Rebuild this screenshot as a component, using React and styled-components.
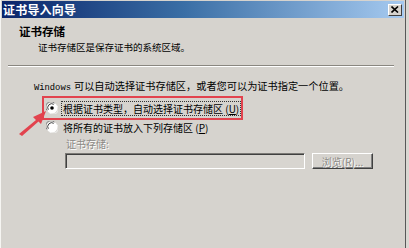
import React from "react";
import styled, { createGlobalStyle } from "styled-components";

const GlobalStyle = createGlobalStyle`
  html, body {
    margin: 0;
    padding: 0;
    background: #dad7d2;
  }
  body {
    font-family: "Noto Sans CJK SC", "Noto Sans", sans-serif;
    color: #000;
  }
`;

const Page = styled.div`
  width: 409px;
  height: 248px;
  overflow: hidden;
  background: #dad7d2;
`;

const Window = styled.div`
  position: relative;
  box-sizing: border-box;
  width: 406px;
  height: 248px;
  padding: 1px 1px 0 1px;
  background: #d6d3ce;
  border-left: 1px solid #f6f5f2;
  border-right: 1px solid #585858;
`;

const TitleBar = styled.div`
  display: flex;
  align-items: center;
  justify-content: space-between;
  height: 17px;
  padding: 0 2px 0 1px;
  background: linear-gradient(to right, #0a246a 0%, #3a6ea5 45%, #a6caf0 100%);
`;

const Title = styled.span`
  color: #fff;
  font-size: 12px;
  font-weight: 700;
  line-height: 17px;
  letter-spacing: 0.2px;
`;

const CloseButton = styled.div`
  display: flex;
  align-items: center;
  justify-content: center;
  box-sizing: border-box;
  width: 14px;
  height: 12px;
  background: #d6d3ce;
  border: 1px solid;
  border-color: #fff #404040 #404040 #fff;
`;

const Header = styled.div`
  padding: 6px 0 0 17px;
`;

const HeaderTitle = styled.div`
  font-size: 11.5px;
  font-weight: 700;
  line-height: 14px;
`;

const HeaderSub = styled.div`
  margin-top: 2px;
  padding-left: 19px;
  font-size: 9.5px;
  line-height: 14px;
`;

const Separator = styled.div`
  margin: 11px 10px 0 6px;
  border-top: 1px solid #8a8780;
  border-bottom: 1px solid #fff;
`;

const Body = styled.div`
  padding: 12px 0 0 32px;
`;

const Intro = styled.div`
  font-size: 10.2px;
  line-height: 14px;
  white-space: nowrap;
`;

const Latin = styled.span`
  font-family: "Liberation Mono", monospace;
  font-size: 8.8px;
  margin-right: 3px;
`;

const Highlight = styled.div`
  display: inline-flex;
  align-items: center;
  box-sizing: border-box;
  width: 201px;
  height: 24px;
  margin-left: 8px;
  padding-left: 2px;
  border: 2px solid #e2434e;
`;

const RadioRow = styled.label`
  display: flex;
  align-items: center;
  gap: 4px;
  height: ${({ $h }) => $h || 14}px;
  margin-left: ${({ $indent }) => $indent || 0}px;
  font-size: 10px;
  white-space: nowrap;
`;

const RadioText = styled.span`
  padding: 0 1px;
  line-height: 13px;
  outline: ${({ $focus }) => ($focus ? "1px dotted #333" : "none")};
`;

const Key = styled.span`
  text-decoration: underline;
`;

const FieldLabel = styled.div`
  margin: 3px 0 0 32px;
  font-size: 10px;
  line-height: 14px;
  color: #8c8a86;
  text-shadow: 1px 1px 0 #fff;
`;

const FieldRow = styled.div`
  display: flex;
  gap: 7px;
  margin: 2px 0 0 31px;
`;

const Field = styled.div`
  box-sizing: border-box;
  width: 240px;
  height: 16px;
  background: #d8d5d0;
  border: 1px solid;
  border-color: #7c7a76 #fff #fff #7c7a76;
  box-shadow: inset 1px 1px 0 #404040;
`;

const Button = styled.div`
  display: flex;
  align-items: center;
  justify-content: center;
  box-sizing: border-box;
  width: 61px;
  height: 16px;
  font-size: 10px;
  color: #8c8a86;
  text-shadow: 1px 1px 0 #fff;
  background: #d6d3ce;
  border: 1px solid;
  border-color: #fff #404040 #404040 #fff;
  box-shadow: inset -1px -1px 0 #808080;
`;

const Arrow = styled.svg`
  position: absolute;
  left: 15px;
  top: 107px;
`;

const Radio = ({ checked }) => (
  <svg width="12" height="12" viewBox="0 0 12 12">
    <circle cx="6" cy="6" r="5.5" fill="#fff" />
    <path d="M1.2 8.5 A5 5 0 0 1 8.5 1.2" stroke="#808080" strokeWidth="1" fill="none" />
    <path d="M2.3 7.8 A4 4 0 0 1 7.8 2.3" stroke="#404040" strokeWidth="1" fill="none" />
    <path d="M3.5 10.8 A5 5 0 0 0 10.8 3.5" stroke="#f0f0f0" strokeWidth="1" fill="none" />
    {checked && <circle cx="6" cy="6" r="1.8" fill="#000" />}
  </svg>
);

export default function App() {
  return (
    <Page>
      <GlobalStyle />
      <Window>
        <TitleBar>
          <Title>证书导入向导</Title>
          <CloseButton>
            <svg width="8" height="7" viewBox="0 0 8 7">
              <path d="M0.5 0.5 L7 6.5 M7 0.5 L0.5 6.5" stroke="#000" strokeWidth="1.6" />
            </svg>
          </CloseButton>
        </TitleBar>
        <Header>
          <HeaderTitle>证书存储</HeaderTitle>
          <HeaderSub>证书存储区是保存证书的系统区域。</HeaderSub>
        </Header>
        <Separator />
        <Body>
          <Intro>
            <Latin>Windows</Latin>可以自动选择证书存储区，或者您可以为证书指定一个位置。
          </Intro>
          <Highlight>
            <RadioRow $h={20}>
              <Radio checked />
              <RadioText $focus>
                根据证书类型，自动选择证书存储区 (<Key>U</Key>)
              </RadioText>
            </RadioRow>
          </Highlight>
          <RadioRow $indent={12}>
            <Radio />
            <RadioText>
              将所有的证书放入下列存储区 (<Key>P</Key>)
            </RadioText>
          </RadioRow>
          <FieldLabel>证书存储:</FieldLabel>
          <FieldRow>
            <Field />
            <Button>浏览(R)...</Button>
          </FieldRow>
        </Body>
        <Arrow width="34" height="30" viewBox="0 0 34 30">
          <path d="M3 27 L20 13 L17 10 L30 4 L25 17 L22.5 14.5 L6 29 Z" fill="#e2434e" />
        </Arrow>
      </Window>
    </Page>
  );
}
